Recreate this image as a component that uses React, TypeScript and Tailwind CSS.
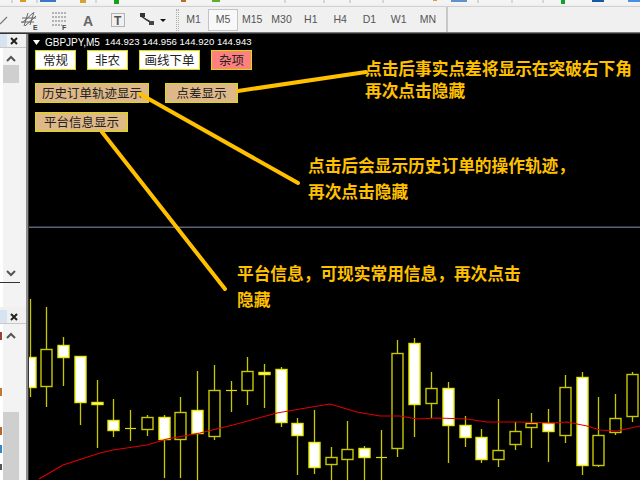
const uiFont = "font-['Liberation_Sans','Noto_Sans_CJK_SC',sans-serif]";
const cjkFont = "font-['Noto_Sans_CJK_SC',sans-serif]";

// x, wick top, wick bottom, body top, body bottom, filled
const candles: [number, number, number, number, number, boolean][] = [
  [30, 299, 397, 357, 387, true],
  [46, 307, 407, 349, 386, false],
  [63, 337, 386, 345, 357, true],
  [80, 356, 425, 356, 402, true],
  [97, 380, 448, 402, 404, true],
  [113, 399, 437, 420, 430, true],
  [130, 410, 441, 428, 428, true],
  [147, 415, 436, 417, 429, false],
  [164, 415, 478, 417, 439, true],
  [180, 397, 478, 412, 439, false],
  [197, 371, 480, 410, 433, true],
  [214, 365, 440, 390, 436, false],
  [231, 381, 412, 390, 390, true],
  [247, 357, 405, 371, 390, false],
  [264, 364, 408, 372, 374, true],
  [281, 367, 427, 369, 422, true],
  [297, 418, 475, 423, 435, true],
  [314, 410, 474, 442, 467, true],
  [331, 447, 480, 457, 464, false],
  [347, 421, 480, 449, 459, false],
  [364, 446, 480, 448, 457, true],
  [381, 430, 480, 457, 457, true],
  [397, 340, 457, 353, 448, false],
  [414, 338, 437, 343, 404, true],
  [431, 372, 418, 388, 403, false],
  [448, 382, 463, 388, 425, true],
  [465, 416, 447, 425, 437, true],
  [481, 429, 463, 437, 459, true],
  [498, 399, 467, 450, 459, false],
  [515, 422, 450, 431, 444, false],
  [531, 413, 448, 423, 427, false],
  [548, 409, 462, 423, 431, true],
  [565, 375, 443, 387, 435, false],
  [582, 372, 475, 377, 465, true],
  [598, 397, 467, 435, 465, false],
  [615, 394, 435, 418, 432, false],
  [632, 372, 422, 374, 416, false],
];

const maLine =
  "39,479 63,465 100,453 113,450 147,445 167,439 200,433 233,425 277,413 300,409 330,404 357,412 380,416 400,416 417,419 437,418 467,419 487,422 507,422 520,422 553,423 567,422 587,426 600,430 617,431 640,426";

const timeframes = ["M1", "M5", "M15", "M30", "H1", "H4", "D1", "W1", "MN"];

function ChartButton({ label, width, kind }: { label: string; width: string; kind: "white" | "tan" | "red" }) {
  const bg = kind === "white" ? "bg-white" : kind === "tan" ? "bg-[#deb887]" : "bg-[#ff8080]";
  return (
    <div className={`${width} h-[20px] ${bg} border-[1.5px] border-[#dcdc00] flex items-center justify-center text-[12.5px] leading-none text-[#222] ${cjkFont}`}>
      {label}
    </div>
  );
}

function Note({ lines, className }: { lines: string[]; className: string }) {
  return (
    <div className={`absolute ${className} text-[16.7px] font-bold text-[#ffc000] whitespace-nowrap ${cjkFont}`}>
      {lines.map((l) => (
        <div key={l}>{l}</div>
      ))}
    </div>
  );
}

function SidePanel({ className, children }: { className: string; children?: React.ReactNode }) {
  return (
    <div className={`relative bg-[#f3f3f3] ${className}`}>
      <div className="absolute left-0 top-0 bottom-0 w-[3px] bg-white" />
      {children}
    </div>
  );
}

function PanelHeader() {
  return (
    <div className="relative h-[14px] flex items-center bg-[#f0f0f0] border-b border-[#c8c8c8]">
      <div className="w-[7px] h-full bg-[#d6e4f2]" />
      <div className="flex-1 flex justify-end pr-[8px]">
        <svg width="8" height="8" viewBox="0 0 8 8">
          <path d="M1 1 7 7M7 1 1 7" stroke="#222" strokeWidth="2" />
        </svg>
      </div>
    </div>
  );
}

function Chevron({ up }: { up: boolean }) {
  return (
    <svg width="10" height="7" viewBox="0 0 10 7">
      <path d={up ? "M1 6 5 2 9 6" : "M1 1 5 5 9 1"} stroke="#555" strokeWidth="2" fill="none" />
    </svg>
  );
}

export default function App() {
  return (
    <div className={`w-[640px] h-[480px] overflow-hidden flex flex-col bg-[#f0f0f0] ${uiFont}`}>
      {/* cut-off top toolbar */}
      <div className="h-[7px] relative border-b border-[#d0d0d0] shrink-0 overflow-hidden">
        <svg width="640" height="7" className="block">
          <rect x="0" y="0" width="640" height="4" fill="#f4f4f4" />
          <rect x="20" y="0" width="6" height="2" fill="#d89a20" />
          <rect x="40" y="0" width="16" height="2" fill="#3c78c8" />
          <rect x="80" y="0" width="6" height="3" fill="#d8a030" />
          <rect x="114" y="0" width="5" height="4" fill="#18a018" />
          <rect x="181" y="0" width="5" height="2" fill="#b87020" />
          <rect x="212" y="0" width="8" height="2" fill="#58b030" />
          <rect x="433" y="0" width="4" height="1" fill="#d8a030" />
          <rect x="451" y="0" width="16" height="2" fill="#6090d0" />
          <rect x="561" y="0" width="4" height="4" fill="#10a030" />
          <rect x="592" y="0" width="12" height="2" fill="#1858a0" />
          <rect x="628" y="0" width="12" height="2" fill="#4890e0" />
          <path d="M12 0V3M37 0V3M96 0V3M285 0V3M324 0V3M350 0V3M383 0V3M478 0V3M512 0V3M543 0V3" stroke="#b8b8b8" />
        </svg>
      </div>

      {/* drawing tools and timeframes */}
      <div className="h-[25px] shrink-0 flex items-center bg-[#f0f0f0] text-[#555]">
        <div className="w-[176px] h-full shrink-0">
          <svg width="176" height="25" viewBox="0 0 176 25">
            <path d="M0 17 7 10" stroke="#777" strokeWidth="1.2" />
            <path d="M22 16 33 6M25 19 36 9M28 6 24 19M34 5 30 18M22 11 36 11M21 15 34 15" stroke="#666" strokeWidth="1" fill="none" />
            <text x="33" y="23" fontSize="7" fontWeight="700" fill="#444">E</text>
            <path d="M52 6H66M52 10H66M52 14H66M52 18H62" stroke="#777" strokeDasharray="2 1" />
            <text x="62" y="23" fontSize="7" fontWeight="700" fill="#444">F</text>
            <text x="83" y="19" fontSize="14" fontWeight="700" fill="#666">A</text>
            <rect x="111.5" y="6.5" width="13" height="13" fill="none" stroke="#777" strokeDasharray="1 1" />
            <text x="114" y="18" fontSize="12" fontWeight="700" fill="#555">T</text>
            <path d="M141 9 147 13 152 16" stroke="#333" strokeWidth="1.5" />
            <rect x="140" y="6" width="5" height="4" fill="#333" />
            <rect x="149" y="14" width="5" height="4" fill="#444" />
            <path d="M160 12H166L163 15Z" fill="#111" />
          </svg>
        </div>
        <div className="w-[3px] h-[22px] border-x border-dotted border-[#aaa] shrink-0" />
        <div className="flex h-full items-center">
          {timeframes.map((t) => (
            <div
              key={t}
              className={`w-[29.3px] h-[22px] flex items-center justify-center text-[10.5px] ${
                t === "M5" ? "border border-[#c4c4c4] bg-[#f8f8f8]" : ""
              }`}
            >
              {t}
            </div>
          ))}
        </div>
        <div className="w-[2px] h-full bg-[#c8c8c8] ml-[3px]" />
      </div>

      <div className="h-px bg-[#777] shrink-0" />
      <div className="h-px bg-[#333] shrink-0" />

      <div className="flex flex-1 min-h-0">
        {/* left panels */}
        <div className="w-[26px] shrink-0 flex flex-col gap-[3px]">
          <SidePanel className="h-[273px]">
            <PanelHeader />
            <div className="flex justify-end pr-[10px] pt-[7px]">
              <Chevron up />
            </div>
            <div className="absolute left-[3px] top-[31px] w-[16px] h-[18px] bg-[#cfcfcf]" />
            <div className="absolute left-[6px] top-[236px]">
              <Chevron up={false} />
            </div>
            <div className="absolute left-0 w-[20px] top-[248px] h-px bg-[#333]" />
          </SidePanel>
          <SidePanel className="flex-1">
            <PanelHeader />
            <div className="flex justify-end pr-[10px] pt-[8px]">
              <Chevron up />
            </div>
            <div className="absolute left-[3px] top-[102px] bottom-0 w-[16px] bg-[#cfcfcf]" />
            <div className="absolute left-0 top-[22px] w-[2px] h-[8px] bg-[#9a4030]" />
            <div className="absolute left-0 top-[78px] w-[2px] h-[8px] bg-[#c07830]" />
            <div className="absolute left-0 top-[117px] w-[2px] h-[8px] bg-[#b06830]" />
            <div className="absolute left-0 top-[135px] w-[2px] h-[8px] bg-[#3088c8]" />
            <div className="absolute left-0 top-[154px] w-[2px] h-[6px] bg-[#555]" />
          </SidePanel>
        </div>
        <div className="w-[3px] shrink-0 bg-[#8c8c8c] border-r border-[#333]" />

        {/* chart */}
        <div className="relative flex-1 bg-black overflow-hidden pl-[6px]">
          <div className="h-[15px] pt-[2px] flex items-center text-[10px] text-white whitespace-nowrap">
            <svg width="8" height="5" viewBox="0 0 8 5" className="mr-[4px] -ml-[2px]">
              <path d="M0 0H7L3.5 5Z" fill="#fff" />
            </svg>
            <span>GBPJPY,M5</span>
            <span className="ml-[5px] text-[9.6px]">144.923 144.956 144.920 144.943</span>
          </div>
          <div className="flex gap-[11px] mt-[1px]">
            <ChartButton label="常规" width="w-[41px]" kind="white" />
            <ChartButton label="非农" width="w-[41px]" kind="white" />
            <ChartButton label="画线下单" width="w-[61px]" kind="white" />
            <ChartButton label="杂项" width="w-[41px]" kind="red" />
          </div>
          <div className="flex gap-[16px] mt-[13px]">
            <ChartButton label="历史订单轨迹显示" width="w-[114px]" kind="tan" />
            <ChartButton label="点差显示" width="w-[73px]" kind="tan" />
          </div>
          <div className="mt-[9px]">
            <ChartButton label="平台信息显示" width="w-[93px]" kind="tan" />
          </div>

          {/* price chart and annotation arrows, drawn in page coordinates */}
          <svg width="611" height="446" viewBox="29 34 611 446" className="absolute left-0 top-0">
            <rect x="29" y="226.5" width="611" height="1.5" fill="#5a6478" />
            {candles.map(([x, top, bottom, bodyTop, bodyBottom, filled]) => (
              <g key={x}>
                <path d={`M${x + 0.5} ${top}V${bottom}`} stroke="#c8c800" strokeWidth="1.3" />
                {bodyTop === bodyBottom ? (
                  <path d={`M${x - 5} ${bodyTop + 0.5}H${x + 6}`} stroke="#dcdc00" strokeWidth="1.2" />
                ) : (
                  <rect
                    x={x - 5}
                    y={bodyTop + 0.5}
                    width={11}
                    height={bodyBottom - bodyTop}
                    fill={filled ? "#fff" : "#000"}
                    stroke={filled ? "#eaea00" : "#c8c800"}
                    strokeWidth="1.4"
                  />
                )}
              </g>
            ))}
            <polyline points={maLine} fill="none" stroke="#e00000" strokeWidth="1.1" />
            <path
              d="M238 91 366 72M140 94 298 183M102 132 225 289"
              stroke="#ffc000"
              strokeWidth="4"
              strokeLinecap="round"
              fill="none"
            />
          </svg>

          <Note lines={["点击后事实点差将显示在突破右下角", "再次点击隐藏"]} className="left-[336px] top-[23px] leading-[22px]" />
          <Note lines={["点击后会显示历史订单的操作轨迹\uFF0C", "再次点击隐藏"]} className="left-[279px] top-[118px] leading-[26px]" />
          <Note lines={["平台信息\uFF0C可现实常用信息\uFF0C再次点击", "隐藏"]} className="left-[208px] top-[226px] leading-[26px]" />
        </div>
      </div>
    </div>
  );
}
